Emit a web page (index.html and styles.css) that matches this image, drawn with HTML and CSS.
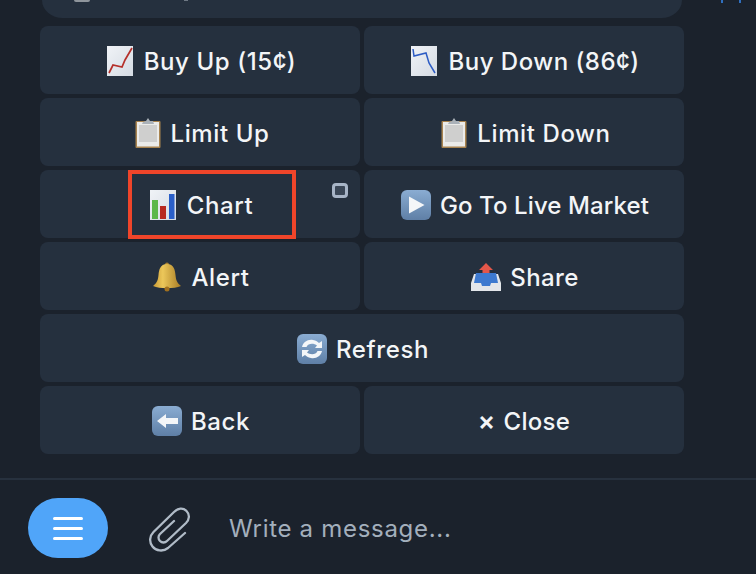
FILE: index.html
```html
<!DOCTYPE html>
<html lang="en">
<head>
<meta charset="utf-8">
<title>Chat keyboard</title>
<link rel="stylesheet" href="styles.css">
</head>
<body>
<div class="app">
  <svg class="defs" width="0" height="0"><defs>
    <linearGradient id="tile" x1="0" y1="0" x2="0" y2="1"><stop offset="0" stop-color="#8aacd2"/><stop offset="1" stop-color="#5f7fa6"/></linearGradient>
    <linearGradient id="paper" x1="0" y1="0" x2="1" y2="1"><stop offset="0" stop-color="#f0f3f7"/><stop offset="1" stop-color="#d5dbe3"/></linearGradient>
    <linearGradient id="gold" x1="0" y1="0" x2="1" y2="0"><stop offset="0" stop-color="#c89a35"/><stop offset=".35" stop-color="#ecc75a"/><stop offset="1" stop-color="#a87c25"/></linearGradient>
    <g id="clip"><rect x="0.500" y="3" width="25" height="27" rx="1" fill="#a8834f"/><rect x="2" y="4" width="22" height="24.500" fill="#ebebe9"/><rect x="4" y="7" width="18" height="17" fill="#cfcfce"/><path d="M8 4 L11 3 L13 0 L15 3 L18 3 L19 6 L7 6 Z" fill="#aab1b8"/></g>
  </defs></svg>
  <div class="bubble-row">
    <div class="bubble"><span class="bubble-avatar"></span><span class="bubble-dot"></span></div>
    <span class="tick tick-a"></span><span class="tick tick-b"></span>
  </div>
  <div class="keyboard">
    <button class="key"><svg class="emoji" viewBox="0 0 26 30"><rect width="26" height="30" fill="url(#paper)"/><path d="M2 27 L6 19 L15 21 L18 14 L25 2" fill="none" stroke="#b5302a" stroke-width="1.700"/></svg><span>Buy Up (15¢)</span></button>
    <button class="key key-down"><svg class="emoji" viewBox="0 0 26 30"><rect width="26" height="30" fill="url(#paper)"/><path d="M2 3 L3 10 L15 7 L18 17 L24 27" fill="none" stroke="#2d5cc4" stroke-width="1.500"/></svg><span>Buy Down (86¢)</span></button>
    <button class="key"><svg class="emoji emoji-clip" viewBox="0 0 26 30"><use href="#clip"/></svg><span>Limit Up</span></button>
    <button class="key"><svg class="emoji emoji-clip" viewBox="0 0 26 30"><use href="#clip"/></svg><span>Limit Down</span></button>
    <button class="key">
      <svg class="emoji" viewBox="0 0 26 30"><rect width="26" height="30" fill="url(#paper)"/><rect x="2" y="10" width="6" height="19" fill="#5cb84a"/><rect x="10" y="16" width="6" height="13" fill="#b8291f"/><rect x="19" y="4" width="5.500" height="25" fill="#2a5fc9"/></svg><span>Chart</span>
      <span class="marker"></span>
      <span class="window-mark"></span>
    </button>
    <button class="key key-live"><svg class="emoji emoji-sq" viewBox="0 0 30 30"><rect width="30" height="30" rx="6" fill="url(#tile)"/><path d="M8 6.500 L23.500 15 L8 23.500 Z" fill="#f4f6f8"/></svg><span>Go To Live Market</span></button>
    <button class="key"><svg class="emoji emoji-sq" viewBox="0 0 30 30"><circle cx="15" cy="2.500" r="2" fill="#a98232"/><path d="M15 2 C8 2 7 8 6.500 13 C6 18 5 21 1 24 C8 27 22 27 29 24 C25 21 24 18 23.500 13 C23 8 22 2 15 2 Z" fill="url(#gold)"/><circle cx="15" cy="27" r="2.500" fill="#a1701f"/></svg><span>Alert</span></button>
    <button class="key key-share"><svg class="emoji emoji-sq" viewBox="0 0 30 30"><path d="M15 1 L22 8 L18.500 8 L18.500 13 L11.500 13 L11.500 8 L8 8 Z" fill="#e4574a"/><path d="M3 12 L8 12 L8 16 L22 16 L22 12 L27 12 L30 21 L30 29 L0 29 L0 21 Z" fill="#e3e6ea"/><path d="M5 11 L25 11 L27 21 L20 21 L19 24 L11 24 L10 21 L3 21 Z" fill="#3d79cf"/></svg><span>Share</span></button>
    <button class="key key-wide"><svg class="emoji emoji-sq" viewBox="0 0 30 30"><rect width="30" height="30" rx="6" fill="url(#tile)"/><path d="M5 13 C6 8 11 5 16 6 C19 6.500 21 8 22 9 L25 7 L25 14 L18 14 L20 11.500 C17 9 11 9 9.500 13 Z" fill="#f4f6f8"/><path d="M25 17 C24 22 19 25 14 24 C11 23.500 9 22 8 21 L5 23 L5 16 L12 16 L10 18.500 C13 21 19 21 20.500 17 Z" fill="#f4f6f8"/></svg><span>Refresh</span></button>
    <button class="key"><svg class="emoji emoji-sq" viewBox="0 0 30 30"><rect width="30" height="30" rx="6" fill="url(#tile)"/><path d="M5 15 L14 8 L14 12 L26 12 L26 18 L14 18 L14 22 Z" fill="#f4f6f8"/></svg><span>Back</span></button>
    <button class="key key-close"><span class="times">×</span><span>Close</span></button>
  </div>
  <div class="composer">
    <button class="menu-btn" aria-label="Menu"><span></span><span></span><span></span></button>
    <svg class="attach" viewBox="0 0 44 48" fill="none" stroke="#b0bbc7" stroke-width="2.300" stroke-linecap="round" stroke-linejoin="round"><path d="M38 29 L21 44 C16 48 9 47 5.500 42.500 C2 38 2.500 32 6.500 28 L27 8 C31 4 36 3.500 39.500 7 C43 10.500 42.500 15.500 39 19 L20 37 C18 39 15 39 13 37 C11 35 11 32 13 30 L27 17"/></svg>
    <span class="placeholder">Write a message...</span>
  </div>
</div>
</body>
</html>
```

FILE: styles.css
```css
* { box-sizing: border-box; }
html, body { margin: 0; padding: 0; }
body {
  width: 756px;
  height: 574px;
  overflow: hidden;
  background: #1b222c;
  font-family: Inter, "Liberation Sans", sans-serif;
}
.app {
  position: relative;
  width: 756px;
  height: 574px;
  display: flex;
  flex-direction: column;
  overflow: hidden;
}
.bubble-row {
  position: relative;
  height: 26px;
  padding: 0 74px 8px 42px;
  flex: none;
}
.bubble {
  position: relative;
  height: 18px;
  background: #25303e;
  border-radius: 0 0 30px 30px / 0 0 26px 26px;
}
.bubble-avatar {
  position: absolute;
  left: 32px;
  top: 0;
  width: 16px;
  height: 2px;
  background: #8f959c;
  border-radius: 0 0 8px 8px;
}
.bubble-dot {
  position: absolute;
  left: 142px;
  top: 0;
  width: 4px;
  height: 1px;
  background: #6e7884;
}
.tick {
  position: absolute;
  top: 0;
  width: 2px;
  height: 3px;
  background: #2f6fc0;
}
.tick-a { left: 721px; }
.tick-b { left: 739px; }
.keyboard {
  flex: none;
  width: 644px;
  margin-left: 40px;
  display: grid;
  grid-template-columns: 320px 320px;
  grid-auto-rows: 68px;
  gap: 4px;
}
.key {
  position: relative;
  display: flex;
  align-items: center;
  justify-content: center;
  gap: 11px;
  border: 0;
  padding: 2px 0 0;
  background: #25303e;
  border-radius: 8px;
  color: #f3f5f7;
  font-family: inherit;
  font-size: 24px;
  font-weight: 500;
  letter-spacing: 0.6px;
}
.key-wide { grid-column: span 2; }
.key-down { letter-spacing: 0.5px; }
.key-live { letter-spacing: 0.1px; }
.key-share { letter-spacing: 0.4px; }
.emoji {
  width: 26px;
  height: 30px;
  flex: none;
  margin-left: 3px;
}
.emoji-clip { margin-left: 4px; margin-right: -1px; }
.emoji-sq {
  width: 30px;
  height: 30px;
  margin-left: 2px;
  margin-right: -2px;
}
.key-close { gap: 8px; letter-spacing: 0.3px; }
.times { font-weight: 600; font-size: 26px; line-height: 1; }
.marker {
  position: absolute;
  left: 88px;
  top: 0;
  width: 168px;
  height: 69px;
  border: 4px solid #f0452a;
  pointer-events: none;
}
.window-mark {
  position: absolute;
  left: 292px;
  top: 13px;
  width: 16px;
  height: 15px;
  background: #3a4656;
  border: 3px solid #a7b4c6;
  border-radius: 4px;
}
.composer {
  margin-top: 24px;
  flex: 1;
  border-top: 2px solid #27313e;
  display: flex;
  align-items: flex-start;
  padding: 18px 0 0 28px;
}
.menu-btn {
  width: 80px;
  height: 60px;
  border: 0;
  padding: 0;
  border-radius: 30px;
  background: #50a5f9;
  display: flex;
  flex-direction: column;
  align-items: center;
  justify-content: center;
  gap: 7px;
  flex: none;
}
.menu-btn span {
  display: block;
  width: 30px;
  height: 3px;
  border-radius: 2px;
  background: #fff;
}
.attach {
  width: 44px;
  height: 48px;
  margin: 6px 0 0 39px;
  flex: none;
}
.placeholder {
  margin: 16px 0 0 38px;
  font-size: 24px;
  line-height: 30px;
  letter-spacing: 0.7px;
  color: #a3afbc;
}
.defs { position: absolute; }
```
